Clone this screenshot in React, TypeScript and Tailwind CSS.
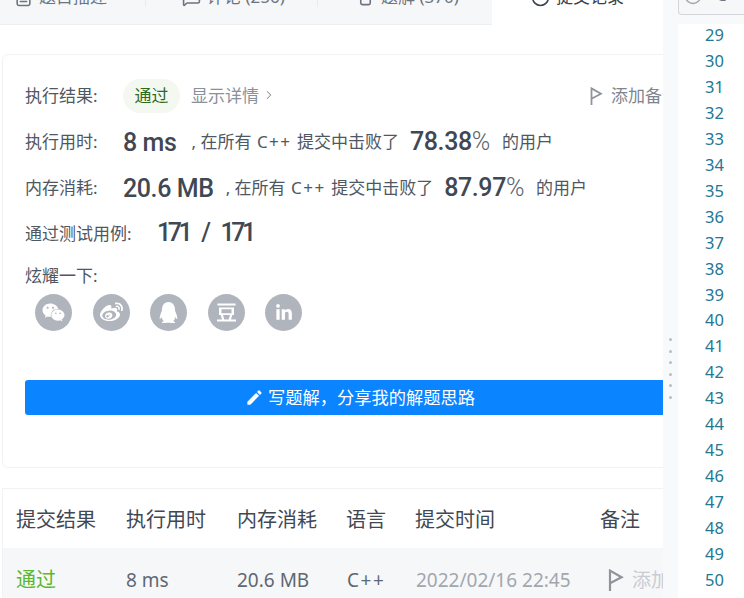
import { FaWeixin, FaWeibo, FaQq, FaLinkedinIn } from 'react-icons/fa'
import { SiDouban } from 'react-icons/si'
import { MdEdit } from 'react-icons/md'
import { Clock, MessageSquare, FileText, Beaker, ChevronRight } from 'lucide-react'

const SANS = "font-['Noto_Sans','Noto_Sans_CJK_SC',sans-serif]"

const SHARE_ICONS = [
  { key: 'wechat', icon: <FaWeixin size={23} /> },
  { key: 'weibo', icon: <FaWeibo size={23} /> },
  { key: 'qq', icon: <FaQq size={21} /> },
  { key: 'douban', icon: <SiDouban size={19} /> },
  { key: 'linkedin', icon: <FaLinkedinIn size={18} /> },
]

const LINE_NUMBERS = Array.from({ length: 22 }, (_, i) => 29 + i)

function FlagIcon({ className }: { className: string }) {
  return (
    <svg viewBox="0 0 14 20" fill="none" stroke="currentColor" strokeWidth="2" className={className}>
      <path d="M2 20V1.5L12.5 7.5L2 13" />
    </svg>
  )
}

function Stat({ value, unit }: { value: string; unit?: string }) {
  return (
    <span className="font-['Roboto',sans-serif] text-[25px] font-medium leading-none tracking-[-0.4px] text-[#3f4853]">
      {value}
      {unit && <span className="font-light text-[#5b6470]">{unit}</span>}
    </span>
  )
}

function SummaryRow({ label, children }: { label: string; children: React.ReactNode }) {
  return (
    <div className="flex h-[46px] items-center whitespace-nowrap text-[#4f5762]">
      <span className="w-[98px] shrink-0 text-[17px]">{label}</span>
      {children}
    </div>
  )
}

function Compare({ memo, pct, gap }: { memo: string; pct: string; gap: string }) {
  return (
    <>
      <Stat value={memo} />
      <span className={`${gap} text-[17px]`}>
        , 在所有 <span className="mx-[1px] tracking-[1.5px]">C++</span> 提交中击败了
      </span>
      <span className="ml-[11px]">
        <Stat value={pct} unit="%" />
      </span>
      <span className="ml-[12px] text-[17px]">的用户</span>
    </>
  )
}

function Tab({ width, pad, icon, label, divider }: { width: string; pad: string; icon: React.ReactNode; label: string; divider?: boolean }) {
  return (
    <div className={`flex h-[7px] items-end gap-[6px] whitespace-nowrap ${width} ${pad} ${divider ? 'border-r border-[#e9eaec]' : ''}`}>
      {icon}
      {label}
    </div>
  )
}

export default function App() {
  return (
    <div className={`${SANS} flex h-[598px] w-[744px] overflow-hidden bg-white`}>
      <div className="flex w-[663px] shrink-0 flex-col overflow-hidden">
        {/* tabs, scrolled so only their lower edge is showing */}
        <div className="flex h-[25px] shrink-0 text-[17px] leading-[20px] text-[#6b7480]">
          <div className="flex h-full flex-1 items-start border-b border-[#eeeff1] bg-[#f6f7f9]">
            <Tab width="w-[146px]" pad="pl-[14px]" icon={<FileText size={19} />} label="题目描述" divider />
            <Tab width="w-[172px]" pad="pl-[36px]" icon={<MessageSquare size={19} />} label="评论 (256)" divider />
            <Tab width="w-[174px]" pad="pl-[38px]" icon={<Beaker size={19} />} label="题解 (370)" />
          </div>
          <div className="flex h-[7px] w-[171px] items-end gap-[6px] whitespace-nowrap pl-[39px] text-[#3a424d]">
            <Clock size={19} />
            提交记录
          </div>
        </div>

        <div className="ml-[2px] mt-[29px] h-[414px] w-[720px] shrink-0 rounded-[6px] border border-[#f2f2f3] pl-[22px] pr-[20px] pt-[17px]">
          <div className="flex h-[47px] items-center whitespace-nowrap text-[#4f5762]">
            <span className="w-[98px] shrink-0 text-[17px]">执行结果:</span>
            <span className="flex h-[34px] w-[57px] shrink-0 items-center justify-center rounded-full bg-[#f3f8f0] text-[17px] text-[#2e6b1c]">
              通过
            </span>
            <span className="ml-[11px] text-[17px] text-[#8a919b]">显示详情</span>
            <ChevronRight size={14} strokeWidth={1.75} className="mb-[2px] ml-[3px] shrink-0 text-[#8a919b]" />
            <FlagIcon className="ml-[313px] h-[18px] w-[14px] shrink-0 text-[#8f949b]" />
            <span className="ml-[8px] text-[17px] text-[#7e858f]">添加备注</span>
          </div>
          <SummaryRow label="执行用时:">
            <Compare memo="8 ms" pct="78.38" gap="ml-[15px]" />
          </SummaryRow>
          <SummaryRow label="内存消耗:">
            <Compare memo="20.6 MB" pct="87.97" gap="ml-[12px]" />
          </SummaryRow>
          <div className="flex h-[45px] items-center text-[#4f5762]">
            <span className="w-[132px] shrink-0 text-[17px]">通过测试用例:</span>
            <span className="[&>span]:tracking-[-3.5px]"><Stat value="171" /></span>
            <span className="ml-[12px] mr-[10px]"><Stat value="/" /></span>
            <span className="[&>span]:tracking-[-3.5px]"><Stat value="171" /></span>
          </div>
          <div className="mt-[9px] text-[17px] leading-[22px] text-[#4f5762]">炫耀一下:</div>
          <div className="ml-[10px] mt-[7px] flex gap-[20.5px]">
            {SHARE_ICONS.map((s) => (
              <span
                key={s.key}
                className="flex h-[37px] w-[37px] items-center justify-center rounded-full bg-[#b0b4bc] text-white"
              >
                {s.icon}
              </span>
            ))}
          </div>
          <button className="mt-[49px] flex h-[35px] w-full items-center rounded-[3px] bg-[#0a84ff] pl-[220px] text-[17.25px] text-white">
            <MdEdit size={19} className="mr-[4px]" />
            写题解，分享我的解题思路
          </button>
        </div>

        <div className="ml-[2px] mt-[20px] w-[680px] shrink-0 border-l border-t border-[#f2f2f3]">
          <div className="flex h-[59px] items-center pt-[2px] text-[20px] text-[#3f4853]">
            <span className="w-[110px] shrink-0 pl-[13px]">提交结果</span>
            <span className="w-[111px] shrink-0 pl-[13px]">执行用时</span>
            <span className="w-[110px] shrink-0 pl-[13px]">内存消耗</span>
            <span className="w-[69px] shrink-0 pl-[12px]">语言</span>
            <span className="w-[197px] shrink-0 pl-[12px]">提交时间</span>
            <span className="shrink-0">备注</span>
          </div>
          <div className="flex h-[64px] items-center bg-[#f6f7f9] text-[19px] text-[#5f6772]">
            <span className="w-[110px] shrink-0 pl-[13px] text-[20px] text-[#5cb82f]">通过</span>
            <span className="w-[111px] shrink-0 pl-[13px]">8 ms</span>
            <span className="w-[110px] shrink-0 pl-[13px]">20.6 MB</span>
            <span className="w-[69px] shrink-0 pl-[13px] tracking-[1.5px]">C++</span>
            <span className="w-[204px] shrink-0 whitespace-nowrap pl-[13px] text-[#a2a7ae]">2022/02/16 22:45</span>
            <FlagIcon className="h-[22px] w-[17px] shrink-0 text-[#8f949b]" />
            <span className="ml-[8px] shrink-0 whitespace-nowrap text-[#c9ccd1]">添加备注</span>
          </div>
        </div>
      </div>

      {/* drag handle */}
      <div className="flex w-[15px] shrink-0 flex-col items-center gap-[8.5px] bg-[#f8f9fb] pt-[338px]">
        {[0, 1, 2, 3, 4, 5].map((i) => (
          <span key={i} className="h-[3px] w-[3px] shrink-0 rounded-full bg-[#b9bcc4]" />
        ))}
      </div>

      <div className="min-w-0 flex-1 bg-[#f8f9fb]">
        <div className="flex h-[15px] items-end gap-[6px] overflow-hidden rounded-bl-[4px] border-b border-l border-[#d3d6db] bg-[#f6f7f9] pb-[9px] pl-[5px] text-[17px] leading-[20px] text-[#6b7480]">
          <Clock size={18} className="shrink-0 text-[#a2a7ae]" />
          <span className="ml-[8px]">C++</span>
        </div>
        <div className="mt-[9px] h-full bg-white pl-[27px] text-[16.5px] leading-[25.95px] text-[#237893]">
          {LINE_NUMBERS.map((n) => (
            <div key={n} className="relative top-[-2px]">{n}</div>
          ))}
        </div>
      </div>
    </div>
  )
}
